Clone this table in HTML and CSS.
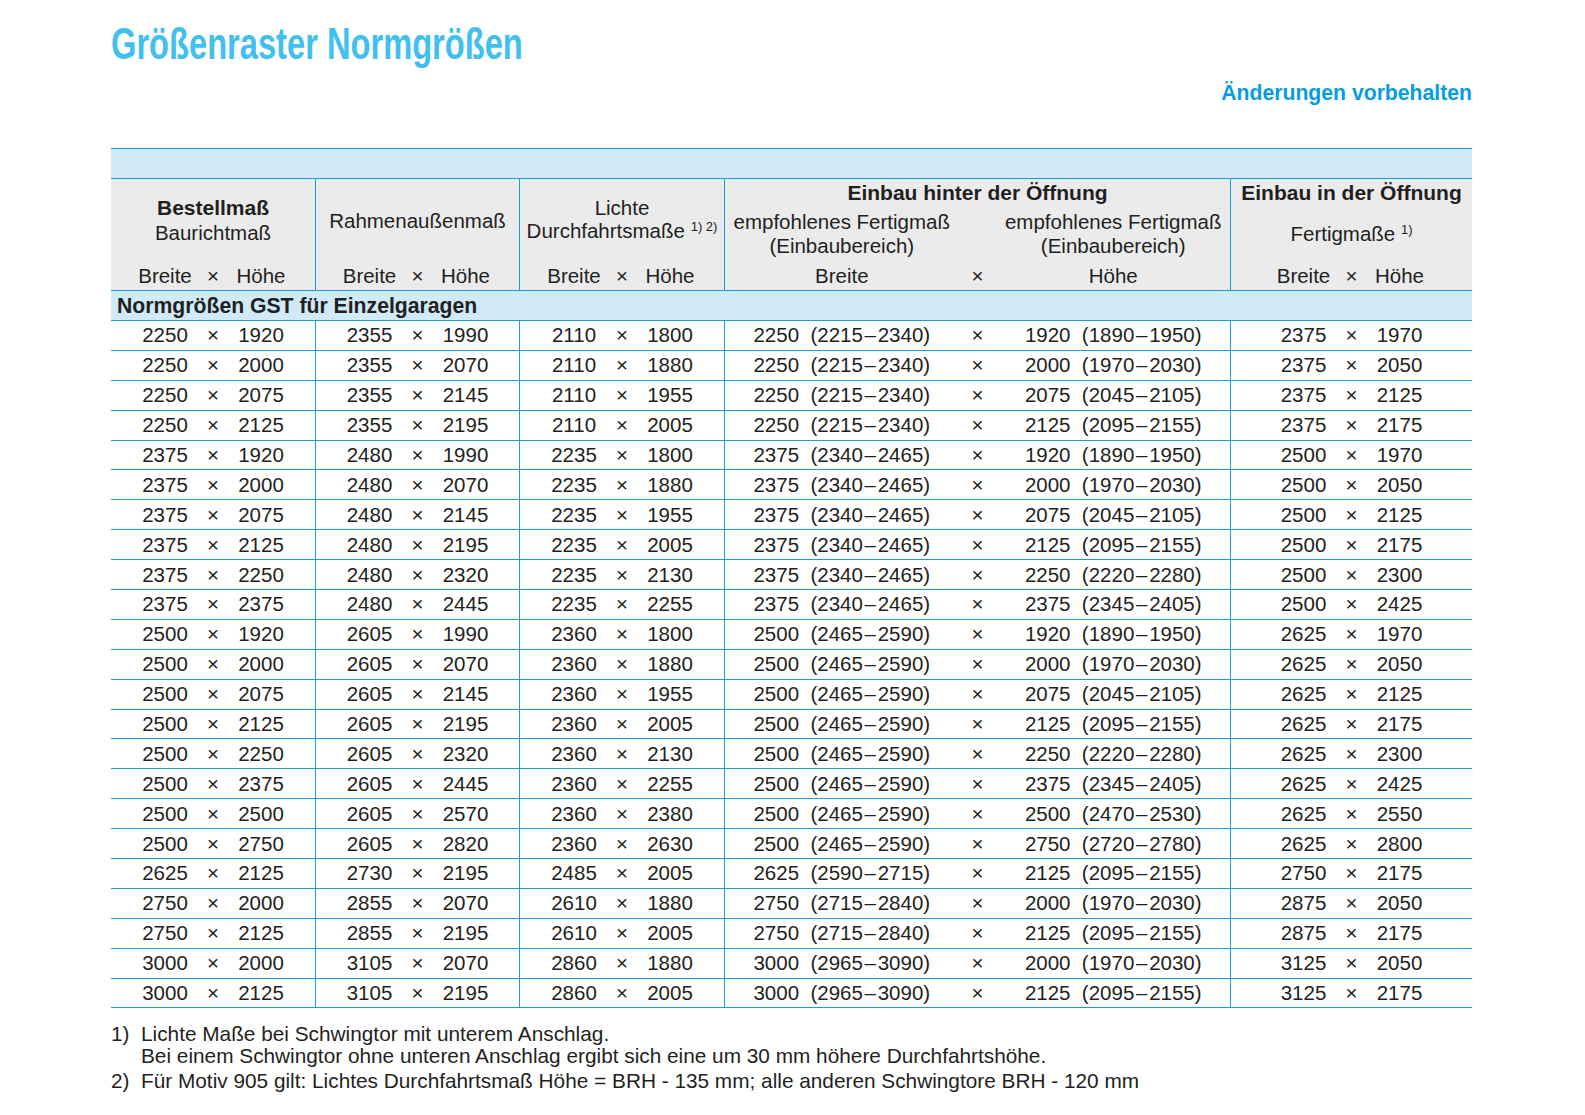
FILE: index.html
```html
<!DOCTYPE html>
<html lang="de">
<head>
<meta charset="utf-8">
<title>Größenraster Normgrößen</title>
<link rel="stylesheet" href="styles.css">
</head>
<body>
<div class="page">
  <h1 class="title"><span>Größenraster Normgrößen</span></h1>
  <p class="note">Änderungen vorbehalten</p>

  <div class="table">
    <div class="band"></div>
    <div class="head">
      <div class="hc">
        <div class="lab"><b>Bestellmaß</b><span>Baurichtmaß</span></div>
        <div class="bh p3"><span>Breite</span><span>×</span><span>Höhe</span></div>
      </div>
      <div class="hc">
        <div class="lab"><span>Rahmenaußenmaß</span></div>
        <div class="bh p3"><span>Breite</span><span>×</span><span>Höhe</span></div>
      </div>
      <div class="hc">
        <div class="lab lift"><span>Lichte</span><span>Durchfahrtsmaße <sup>1) 2)</sup></span></div>
        <div class="bh p3"><span>Breite</span><span>×</span><span>Höhe</span></div>
      </div>
      <div class="hc">
        <div class="grp">Einbau hinter der Öffnung</div>
        <div class="lab sub p4"><span>empfohlenes Fertigmaß<br>(Einbaubereich)</span><span></span><span>empfohlenes Fertigmaß<br>(Einbaubereich)</span></div>
        <div class="bh p4"><span>Breite</span><span>×</span><span>Höhe</span></div>
      </div>
      <div class="hc">
        <div class="grp">Einbau in der Öffnung</div>
        <div class="lab sub"><span>Fertigmaße <sup>1)</sup></span></div>
        <div class="bh p3"><span>Breite</span><span>×</span><span>Höhe</span></div>
      </div>
    </div>
    <div class="section">Normgrößen GST für Einzelgaragen</div>

    <div class="row"><div class="p3"><span>2250</span><span>×</span><span>1920</span></div><div class="p3"><span>2355</span><span>×</span><span>1990</span></div><div class="p3"><span>2110</span><span>×</span><span>1800</span></div><div class="p4"><span>2250&nbsp;&nbsp;(2215&#8202;–&#8202;2340)</span><span>×</span><span>1920&nbsp;&nbsp;(1890&#8202;–&#8202;1950)</span></div><div class="p3"><span>2375</span><span>×</span><span>1970</span></div></div>
    <div class="row"><div class="p3"><span>2250</span><span>×</span><span>2000</span></div><div class="p3"><span>2355</span><span>×</span><span>2070</span></div><div class="p3"><span>2110</span><span>×</span><span>1880</span></div><div class="p4"><span>2250&nbsp;&nbsp;(2215&#8202;–&#8202;2340)</span><span>×</span><span>2000&nbsp;&nbsp;(1970&#8202;–&#8202;2030)</span></div><div class="p3"><span>2375</span><span>×</span><span>2050</span></div></div>
    <div class="row"><div class="p3"><span>2250</span><span>×</span><span>2075</span></div><div class="p3"><span>2355</span><span>×</span><span>2145</span></div><div class="p3"><span>2110</span><span>×</span><span>1955</span></div><div class="p4"><span>2250&nbsp;&nbsp;(2215&#8202;–&#8202;2340)</span><span>×</span><span>2075&nbsp;&nbsp;(2045&#8202;–&#8202;2105)</span></div><div class="p3"><span>2375</span><span>×</span><span>2125</span></div></div>
    <div class="row"><div class="p3"><span>2250</span><span>×</span><span>2125</span></div><div class="p3"><span>2355</span><span>×</span><span>2195</span></div><div class="p3"><span>2110</span><span>×</span><span>2005</span></div><div class="p4"><span>2250&nbsp;&nbsp;(2215&#8202;–&#8202;2340)</span><span>×</span><span>2125&nbsp;&nbsp;(2095&#8202;–&#8202;2155)</span></div><div class="p3"><span>2375</span><span>×</span><span>2175</span></div></div>
    <div class="row"><div class="p3"><span>2375</span><span>×</span><span>1920</span></div><div class="p3"><span>2480</span><span>×</span><span>1990</span></div><div class="p3"><span>2235</span><span>×</span><span>1800</span></div><div class="p4"><span>2375&nbsp;&nbsp;(2340&#8202;–&#8202;2465)</span><span>×</span><span>1920&nbsp;&nbsp;(1890&#8202;–&#8202;1950)</span></div><div class="p3"><span>2500</span><span>×</span><span>1970</span></div></div>
    <div class="row"><div class="p3"><span>2375</span><span>×</span><span>2000</span></div><div class="p3"><span>2480</span><span>×</span><span>2070</span></div><div class="p3"><span>2235</span><span>×</span><span>1880</span></div><div class="p4"><span>2375&nbsp;&nbsp;(2340&#8202;–&#8202;2465)</span><span>×</span><span>2000&nbsp;&nbsp;(1970&#8202;–&#8202;2030)</span></div><div class="p3"><span>2500</span><span>×</span><span>2050</span></div></div>
    <div class="row"><div class="p3"><span>2375</span><span>×</span><span>2075</span></div><div class="p3"><span>2480</span><span>×</span><span>2145</span></div><div class="p3"><span>2235</span><span>×</span><span>1955</span></div><div class="p4"><span>2375&nbsp;&nbsp;(2340&#8202;–&#8202;2465)</span><span>×</span><span>2075&nbsp;&nbsp;(2045&#8202;–&#8202;2105)</span></div><div class="p3"><span>2500</span><span>×</span><span>2125</span></div></div>
    <div class="row"><div class="p3"><span>2375</span><span>×</span><span>2125</span></div><div class="p3"><span>2480</span><span>×</span><span>2195</span></div><div class="p3"><span>2235</span><span>×</span><span>2005</span></div><div class="p4"><span>2375&nbsp;&nbsp;(2340&#8202;–&#8202;2465)</span><span>×</span><span>2125&nbsp;&nbsp;(2095&#8202;–&#8202;2155)</span></div><div class="p3"><span>2500</span><span>×</span><span>2175</span></div></div>
    <div class="row"><div class="p3"><span>2375</span><span>×</span><span>2250</span></div><div class="p3"><span>2480</span><span>×</span><span>2320</span></div><div class="p3"><span>2235</span><span>×</span><span>2130</span></div><div class="p4"><span>2375&nbsp;&nbsp;(2340&#8202;–&#8202;2465)</span><span>×</span><span>2250&nbsp;&nbsp;(2220&#8202;–&#8202;2280)</span></div><div class="p3"><span>2500</span><span>×</span><span>2300</span></div></div>
    <div class="row"><div class="p3"><span>2375</span><span>×</span><span>2375</span></div><div class="p3"><span>2480</span><span>×</span><span>2445</span></div><div class="p3"><span>2235</span><span>×</span><span>2255</span></div><div class="p4"><span>2375&nbsp;&nbsp;(2340&#8202;–&#8202;2465)</span><span>×</span><span>2375&nbsp;&nbsp;(2345&#8202;–&#8202;2405)</span></div><div class="p3"><span>2500</span><span>×</span><span>2425</span></div></div>
    <div class="row"><div class="p3"><span>2500</span><span>×</span><span>1920</span></div><div class="p3"><span>2605</span><span>×</span><span>1990</span></div><div class="p3"><span>2360</span><span>×</span><span>1800</span></div><div class="p4"><span>2500&nbsp;&nbsp;(2465&#8202;–&#8202;2590)</span><span>×</span><span>1920&nbsp;&nbsp;(1890&#8202;–&#8202;1950)</span></div><div class="p3"><span>2625</span><span>×</span><span>1970</span></div></div>
    <div class="row"><div class="p3"><span>2500</span><span>×</span><span>2000</span></div><div class="p3"><span>2605</span><span>×</span><span>2070</span></div><div class="p3"><span>2360</span><span>×</span><span>1880</span></div><div class="p4"><span>2500&nbsp;&nbsp;(2465&#8202;–&#8202;2590)</span><span>×</span><span>2000&nbsp;&nbsp;(1970&#8202;–&#8202;2030)</span></div><div class="p3"><span>2625</span><span>×</span><span>2050</span></div></div>
    <div class="row"><div class="p3"><span>2500</span><span>×</span><span>2075</span></div><div class="p3"><span>2605</span><span>×</span><span>2145</span></div><div class="p3"><span>2360</span><span>×</span><span>1955</span></div><div class="p4"><span>2500&nbsp;&nbsp;(2465&#8202;–&#8202;2590)</span><span>×</span><span>2075&nbsp;&nbsp;(2045&#8202;–&#8202;2105)</span></div><div class="p3"><span>2625</span><span>×</span><span>2125</span></div></div>
    <div class="row"><div class="p3"><span>2500</span><span>×</span><span>2125</span></div><div class="p3"><span>2605</span><span>×</span><span>2195</span></div><div class="p3"><span>2360</span><span>×</span><span>2005</span></div><div class="p4"><span>2500&nbsp;&nbsp;(2465&#8202;–&#8202;2590)</span><span>×</span><span>2125&nbsp;&nbsp;(2095&#8202;–&#8202;2155)</span></div><div class="p3"><span>2625</span><span>×</span><span>2175</span></div></div>
    <div class="row"><div class="p3"><span>2500</span><span>×</span><span>2250</span></div><div class="p3"><span>2605</span><span>×</span><span>2320</span></div><div class="p3"><span>2360</span><span>×</span><span>2130</span></div><div class="p4"><span>2500&nbsp;&nbsp;(2465&#8202;–&#8202;2590)</span><span>×</span><span>2250&nbsp;&nbsp;(2220&#8202;–&#8202;2280)</span></div><div class="p3"><span>2625</span><span>×</span><span>2300</span></div></div>
    <div class="row"><div class="p3"><span>2500</span><span>×</span><span>2375</span></div><div class="p3"><span>2605</span><span>×</span><span>2445</span></div><div class="p3"><span>2360</span><span>×</span><span>2255</span></div><div class="p4"><span>2500&nbsp;&nbsp;(2465&#8202;–&#8202;2590)</span><span>×</span><span>2375&nbsp;&nbsp;(2345&#8202;–&#8202;2405)</span></div><div class="p3"><span>2625</span><span>×</span><span>2425</span></div></div>
    <div class="row"><div class="p3"><span>2500</span><span>×</span><span>2500</span></div><div class="p3"><span>2605</span><span>×</span><span>2570</span></div><div class="p3"><span>2360</span><span>×</span><span>2380</span></div><div class="p4"><span>2500&nbsp;&nbsp;(2465&#8202;–&#8202;2590)</span><span>×</span><span>2500&nbsp;&nbsp;(2470&#8202;–&#8202;2530)</span></div><div class="p3"><span>2625</span><span>×</span><span>2550</span></div></div>
    <div class="row"><div class="p3"><span>2500</span><span>×</span><span>2750</span></div><div class="p3"><span>2605</span><span>×</span><span>2820</span></div><div class="p3"><span>2360</span><span>×</span><span>2630</span></div><div class="p4"><span>2500&nbsp;&nbsp;(2465&#8202;–&#8202;2590)</span><span>×</span><span>2750&nbsp;&nbsp;(2720&#8202;–&#8202;2780)</span></div><div class="p3"><span>2625</span><span>×</span><span>2800</span></div></div>
    <div class="row"><div class="p3"><span>2625</span><span>×</span><span>2125</span></div><div class="p3"><span>2730</span><span>×</span><span>2195</span></div><div class="p3"><span>2485</span><span>×</span><span>2005</span></div><div class="p4"><span>2625&nbsp;&nbsp;(2590&#8202;–&#8202;2715)</span><span>×</span><span>2125&nbsp;&nbsp;(2095&#8202;–&#8202;2155)</span></div><div class="p3"><span>2750</span><span>×</span><span>2175</span></div></div>
    <div class="row"><div class="p3"><span>2750</span><span>×</span><span>2000</span></div><div class="p3"><span>2855</span><span>×</span><span>2070</span></div><div class="p3"><span>2610</span><span>×</span><span>1880</span></div><div class="p4"><span>2750&nbsp;&nbsp;(2715&#8202;–&#8202;2840)</span><span>×</span><span>2000&nbsp;&nbsp;(1970&#8202;–&#8202;2030)</span></div><div class="p3"><span>2875</span><span>×</span><span>2050</span></div></div>
    <div class="row"><div class="p3"><span>2750</span><span>×</span><span>2125</span></div><div class="p3"><span>2855</span><span>×</span><span>2195</span></div><div class="p3"><span>2610</span><span>×</span><span>2005</span></div><div class="p4"><span>2750&nbsp;&nbsp;(2715&#8202;–&#8202;2840)</span><span>×</span><span>2125&nbsp;&nbsp;(2095&#8202;–&#8202;2155)</span></div><div class="p3"><span>2875</span><span>×</span><span>2175</span></div></div>
    <div class="row"><div class="p3"><span>3000</span><span>×</span><span>2000</span></div><div class="p3"><span>3105</span><span>×</span><span>2070</span></div><div class="p3"><span>2860</span><span>×</span><span>1880</span></div><div class="p4"><span>3000&nbsp;&nbsp;(2965&#8202;–&#8202;3090)</span><span>×</span><span>2000&nbsp;&nbsp;(1970&#8202;–&#8202;2030)</span></div><div class="p3"><span>3125</span><span>×</span><span>2050</span></div></div>
    <div class="row"><div class="p3"><span>3000</span><span>×</span><span>2125</span></div><div class="p3"><span>3105</span><span>×</span><span>2195</span></div><div class="p3"><span>2860</span><span>×</span><span>2005</span></div><div class="p4"><span>3000&nbsp;&nbsp;(2965&#8202;–&#8202;3090)</span><span>×</span><span>2125&nbsp;&nbsp;(2095&#8202;–&#8202;2155)</span></div><div class="p3"><span>3125</span><span>×</span><span>2175</span></div></div>
  </div>

  <div class="notes">
    <div class="fn"><span>1)</span><span>Lichte Maße bei Schwingtor mit unterem Anschlag.<br>Bei einem Schwingtor ohne unteren Anschlag ergibt sich eine um 30 mm höhere Durchfahrtshöhe.</span></div>
    <div class="fn fn2"><span>2)</span><span>Für Motiv 905 gilt: Lichtes Durchfahrtsmaß Höhe = BRH - 135 mm; alle anderen Schwingtore BRH - 120 mm</span></div>
  </div>
</div>
</body>
</html>
```

FILE: styles.css
```css
html, body {
  margin: 0;
  padding: 0;
  background: #ffffff;
}

body {
  font-family: "Liberation Sans", Arial, sans-serif;
  color: #231f20;
  font-size: 20.5px;
}

.page {
  width: 1361px;
  margin-left: 111px;
  padding-top: 19px;
}

.title {
  margin: 0;
  font-family: "Liberation Sans", Arial, sans-serif;
  font-weight: bold;
  font-size: 44px;
  line-height: 50px;
  color: #41c0ef;
  white-space: nowrap;
}

.title span {
  display: inline-block;
  transform: scaleX(0.742);
  transform-origin: left center;
}

.note {
  margin: 12px 0 0;
  text-align: right;
  font-weight: bold;
  font-size: 21.2px;
  line-height: 24px;
  color: #069de0;
}

.table {
  margin-top: 43px;
  border-top: 1px solid #1b9ad6;
}

.band {
  height: 29px;
  background: #d0eaf8;
  border-bottom: 1px solid #1b9ad6;
}

.head,
.row {
  display: grid;
  grid-template-columns: 204px 204px 205px 506px 242px;
}

.head {
  height: 111px;
  background: #ebebeb;
  border-bottom: 1px solid #1b9ad6;
}

.hc {
  display: flex;
  flex-direction: column;
  text-align: center;
  line-height: 23px;
}

.hc + .hc,
.row > div + div {
  border-left: 1px solid #1b9ad6;
}

.lab {
  flex: 1;
  display: flex;
  flex-direction: column;
  justify-content: center;
  align-items: center;
  white-space: nowrap;
}

.lab.lift {
  padding-bottom: 3px;
}

.lab.p4 {
  flex-direction: row;
  justify-content: center;
  line-height: 24px;
}

.lab b {
  font-weight: bold;
  font-size: 21px;
  position: relative;
  top: -2px;
}

.grp {
  font-weight: bold;
  font-size: 21px;
  height: 24px;
  line-height: 24px;
  margin-top: 2px;
  white-space: nowrap;
}

sup {
  font-size: 13px;
  vertical-align: 0;
  position: relative;
  top: -7px;
  line-height: 0;
}

.bh {
  height: 28px;
  line-height: 28px;
}

.p3,
.p4 {
  display: flex;
  justify-content: center;
  align-items: center;
  white-space: nowrap;
}

.p3 > span {
  width: 48px;
  display: flex;
  justify-content: center;
}

.p4 > span {
  width: 234px;
  display: flex;
  justify-content: center;
}

.p4 > span:nth-child(2) {
  width: 38px;
}

.section {
  height: 29px;
  line-height: 29px;
  background: #d0eaf8;
  border-bottom: 1px solid #1b9ad6;
  font-weight: bold;
  font-size: 21.2px;
  padding-left: 6px;
}

.row {
  height: 28.9px;
  border-bottom: 1px solid #1b9ad6;
}

.row > div {
  height: 28.9px;
}

.notes {
  margin-top: 15px;
  line-height: 22px;
  font-size: 20.8px;
}

.fn {
  display: grid;
  grid-template-columns: 30px 1fr;
}

.fn2 {
  margin-top: 3px;
}
```
